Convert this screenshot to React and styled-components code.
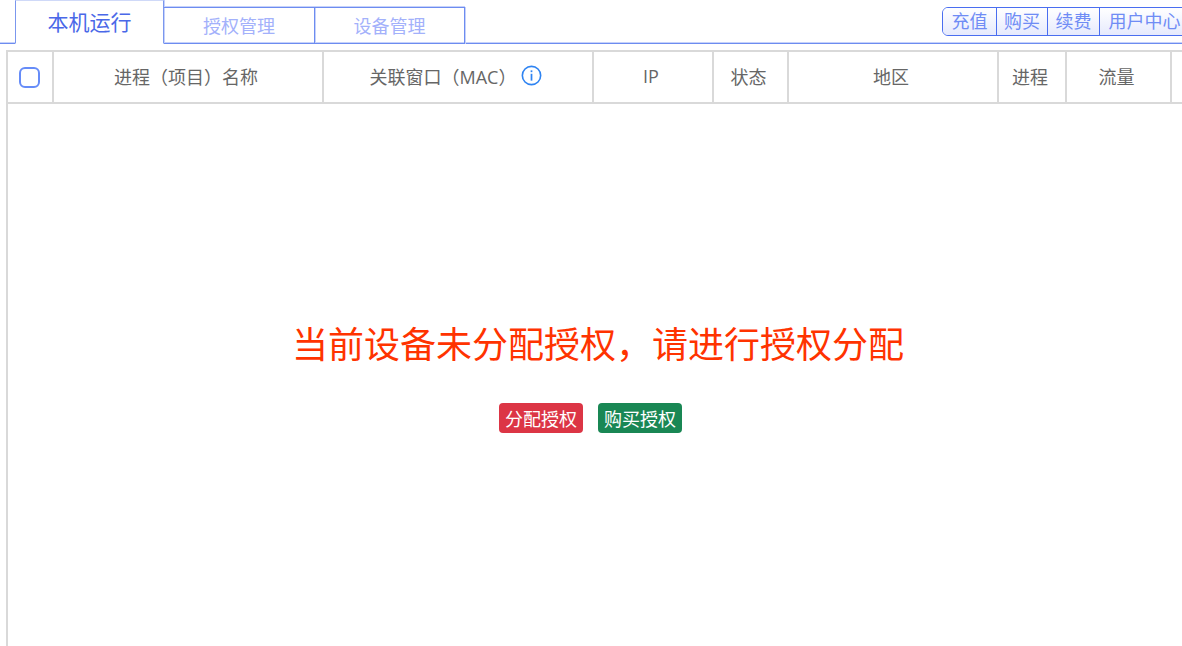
import React from "react";
import styled, { createGlobalStyle } from "styled-components";

const GlobalStyle = createGlobalStyle`
  html, body {
    margin: 0;
    padding: 0;
    height: 100%;
    background: #fff;
    overflow: hidden;
  }
  body {
    font-family: "Open Sans", "Noto Sans CJK SC", sans-serif;
  }
  * {
    box-sizing: border-box;
  }
`;

const columns = [
  { label: "进程（项目）名称", width: 270 },
  { label: "关联窗口（MAC）", width: 270, info: true },
  { label: "IP", width: 120 },
  { label: "状态", width: 75 },
  { label: "地区", width: 210 },
  { label: "进程", width: 68 },
  { label: "流量", width: 105 },
  { label: "", width: 40 },
];

const App = () => {
  return (
    <Page>
      <GlobalStyle />
      <TabBar>
        <ActiveTab>本机运行</ActiveTab>
        <Tab $w={151}>授权管理</Tab>
        <Tab $w={150}>设备管理</Tab>
        <LinkGroup>
          <LinkButton $w={53}>充值</LinkButton>
          <LinkButton $w={51}>购买</LinkButton>
          <LinkButton $w={52}>续费</LinkButton>
          <LinkButton $w={90}>用户中心</LinkButton>
        </LinkGroup>
      </TabBar>
      <Table>
        <HeadRow>
          <CheckCell>
            <CheckBox />
          </CheckCell>
          {columns.map((col, i) => (
            <HeadCell key={i} $w={col.width}>
              {col.label}
              {col.info && (
                <InfoIcon viewBox="0 0 22 22">
                  <circle cx="11" cy="11" r="9.6" fill="none" stroke="#2f84f2" strokeWidth="1.7" />
                  <rect x="10.1" y="9.2" width="1.8" height="7.2" fill="#2f84f2" />
                  <rect x="10.1" y="5.6" width="1.8" height="1.9" fill="#2f84f2" />
                </InfoIcon>
              )}
            </HeadCell>
          ))}
        </HeadRow>
        <Body>
          <Notice>当前设备未分配授权，请进行授权分配</Notice>
          <Actions>
            <ActionButton $bg="#dc3545">分配授权</ActionButton>
            <ActionButton $bg="#198754">购买授权</ActionButton>
          </Actions>
        </Body>
      </Table>
    </Page>
  );
};

const Page = styled.div`
  width: 1182px;
  height: 646px;
  overflow: hidden;
  display: flex;
  flex-direction: column;
`;

const TabBar = styled.div`
  height: 44px;
  flex: none;
  display: flex;
  align-items: flex-end;
  padding-left: 15px;
  border-bottom: 1px solid #6d8cf0;
  box-shadow: inset 0 -1px 0 #c6d2fa;
`;

const Tab = styled.div`
  width: ${(p) => p.$w}px;
  height: 37px;
  margin-bottom: -1px;
  border: 1px solid #6d8cf0;
  border-left: none;
  box-shadow: 1px 0 0 #c6d2fa, 0 -1px 0 #c6d2fa, inset 0 -1px 0 #c6d2fa;
  display: flex;
  align-items: center;
  justify-content: center;
  padding-bottom: 2px;
  font-size: 18px;
  color: #a3b1fb;
`;

const ActiveTab = styled.div`
  width: 149px;
  height: 44px;
  margin-bottom: -1px;
  border: 1px solid #7b97ee;
  border-top-color: #cfd9f8;
  border-bottom: 1px solid #fff;
  background: #fff;
  box-shadow: 1px 0 0 #c6d2fa;
  display: flex;
  align-items: center;
  justify-content: center;
  padding-bottom: 2px;
  font-size: 21px;
  color: #4a68e8;
`;

const LinkGroup = styled.div`
  margin-left: auto;
  margin-right: -8px;
  align-self: flex-start;
  margin-top: 7px;
  display: flex;
  height: 29px;
  border: 1px solid #4a6ef0;
  border-radius: 6px 0 0 6px;
  overflow: hidden;
`;

const LinkButton = styled.div`
  width: ${(p) => p.$w}px;
  display: flex;
  align-items: center;
  justify-content: center;
  padding-bottom: 3px;
  font-size: 18px;
  color: #6f8cf5;
  background: linear-gradient(#ffffff, #e6eafd);
  border-left: 1px solid #4a6ef0;
  &:first-child {
    border-left: none;
  }
`;

const Table = styled.div`
  flex: 1;
  margin: 6px 0 0 6px;
  border-left: 2px solid #d9d9d9;
  display: flex;
  flex-direction: column;
`;

const HeadRow = styled.div`
  height: 54px;
  flex: none;
  display: flex;
  border-top: 2px solid #d9d9d9;
  border-bottom: 2px solid #d9d9d9;
`;

const CheckCell = styled.div`
  width: 46px;
  flex: none;
  border-right: 2px solid #d9d9d9;
  display: flex;
  align-items: center;
  justify-content: center;
  padding-right: 2px;
`;

const CheckBox = styled.div`
  width: 21px;
  height: 21px;
  border: 2px solid #668cf8;
  border-radius: 6px;
`;

const HeadCell = styled.div`
  width: ${(p) => p.$w}px;
  flex: none;
  border-right: 2px solid #d9d9d9;
  display: flex;
  align-items: center;
  justify-content: center;
  padding: 0 4px 3px 0;
  font-size: 18px;
  color: #666;
`;

const InfoIcon = styled.svg`
  width: 21px;
  height: 21px;
  margin-left: 5px;
`;

const Body = styled.div`
  flex: 1;
  display: flex;
  flex-direction: column;
  align-items: center;
  padding-top: 216px;
`;

const Notice = styled.div`
  margin-left: 6px;
  font-size: 36px;
  line-height: 50px;
  color: #ff3300;
`;

const Actions = styled.div`
  display: flex;
  gap: 15px;
  margin-top: 33px;
  margin-right: 9px;
`;

const ActionButton = styled.div`
  width: 84px;
  height: 30px;
  border-radius: 4px;
  background: ${(p) => p.$bg};
  color: #fff;
  font-size: 18px;
  display: flex;
  align-items: center;
  justify-content: center;
`;

export default App;
